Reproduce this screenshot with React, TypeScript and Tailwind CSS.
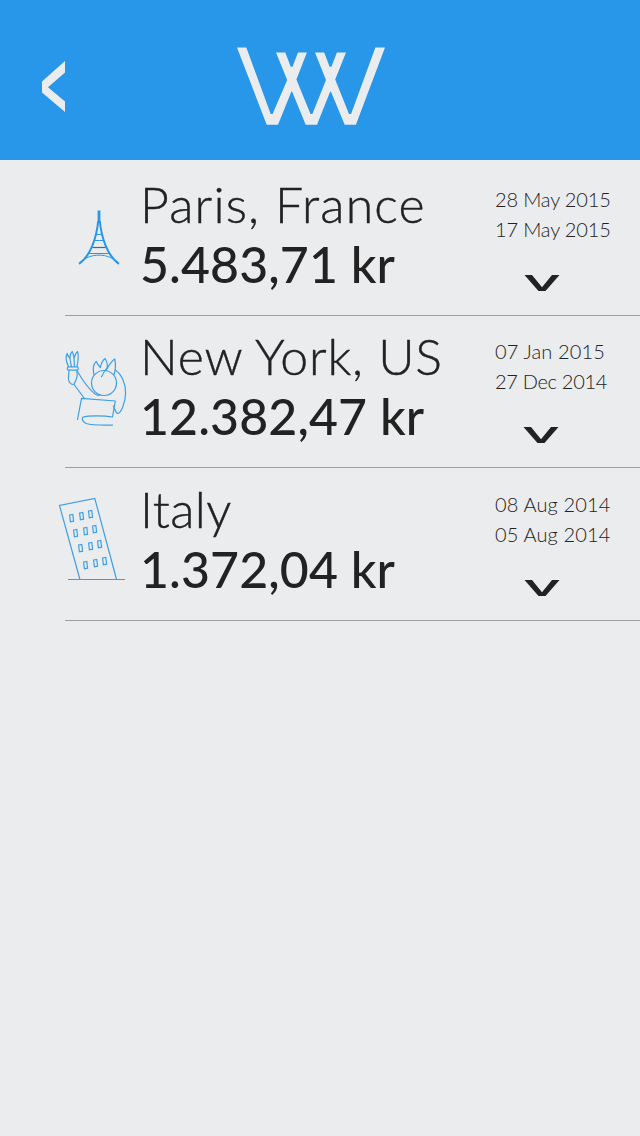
import type { ReactNode } from 'react';

function Logo() {
  return (
    <svg className="h-[80px] w-[150px]" viewBox="236 46 150 80" fill="#ebecee" aria-label="Logo">
      <path d="M237 47.4h9.3l24.4 66.6h1.9L287.2 80 276 52.4h9.3l5.4 14.3h1.8l5.5-14.3h8.9L296.4 79.5 310.5 114h1.9L326 80 315 52.4h9.2l5.4 14.3h1.8l5.5-14.3h9.1L335.2 79.5 349 114h2.1l24.3-66.6h9.6L355.9 124.7h-11.2L331 91.7h-.9L317 124.7h-11.3L292.2 91.7h-.9L278 124.7h-11.3z" />
    </svg>
  );
}

function EiffelTower() {
  return (
    <svg className="h-[141px] w-[140px] shrink-0" viewBox="0 174 140 141" fill="none" stroke="#2897e9">
      <path d="M99 210.5V223" strokeWidth="2.8" />
      <path d="M98.2 221C96.8 236 91 256 79 263.8M99.8 221C101.2 236 107 256 119 263.8" strokeWidth="2" />
      <path d="M96.5 234.5h5M94.5 240.5h9M88 253.5h22M80 263c9-10.5 29-10.5 38 0" strokeWidth="1" />
      <path d="M92.5 247.5h13" stroke="#1976ba" strokeWidth="1.2" />
    </svg>
  );
}

function LibertyStatue() {
  return (
    <svg className="h-[141px] w-[140px] shrink-0" viewBox="0 326 140 141" fill="none" stroke="#3b9fe8" strokeWidth="1.2" strokeLinejoin="round" strokeLinecap="round">
      <path d="M68.5 366.5C66 361 65.5 356 67.2 353.5C68 356 68.8 357.5 70 358.5C70 355 71 352.5 72.3 351.5C73.4 354 73.8 356 74 358.5C75 355 76 352.5 77.6 351.5C78.8 356 78.2 361 77 366.5M71.5 366.5C70.4 362 70.2 360 70 358.5M74.5 366.5L74 358.5" />
      <rect x="67.3" y="366.8" width="11" height="3.3" rx="1.4" />
      <path d="M69 370.3L68.4 379C69 382.5 71.5 384.5 73.8 384.5C75.5 381.5 77.2 377.5 77.2 374.5L76.8 370.3" />
      <path d="M77.5 371.5C83 381 90 390 95 394C97 395.3 99 395.5 100 395M74 384.5L84.5 398.5" />
      <circle cx="104" cy="383" r="12.5" />
      <path d="M93.8 374.5C92.7 369 93.5 364 96.2 361.3C97.5 364.5 99.3 366.5 100.3 367.5C101.3 363 103 360 105 358.5C106.8 361 107.6 364.5 107.3 368M106 370.5C108.5 366 111 361.5 114.7 359C115.8 364 115.6 370 114 374.5M101.5 376.7C103.5 372.5 105.5 369.5 107.5 367" />
      <path d="M115.2 370C121 373.5 125.8 383 125.6 393C125.3 403 121 413.5 117.5 413.5C115.8 412.5 114.5 409 113.5 406" />
      <path d="M77.5 419.5L81.5 398.3L115.3 401L112.5 417C105 415.5 88 415.3 83.3 417C81 418.8 82.7 422 86 423.5C94 425.7 103 425 112.5 425.1" />
    </svg>
  );
}

const towerWindows = [
  [71.5, 518], [81.5, 516], [90.4, 514],
  [75.5, 533], [85.5, 531], [94.5, 529],
  [80.5, 548], [90.5, 546], [99.5, 544],
  [85.5, 565], [95.5, 563], [104.5, 561],
];

function LeaningTower() {
  return (
    <svg className="h-[141px] w-[140px] shrink-0" viewBox="0 479 140 141" fill="none" stroke="#3b9fe8" strokeWidth="1.2">
      <path d="M79.8 579L59.5 505.4L94.8 498.4L116.4 579" />
      <path d="M68 579.5h57" />
      {towerWindows.map(([x, y]) => (
        <path key={`${x}-${y}`} d={`M${x - 1.9} ${y - 3}l3.2-.6l.8 6.8l-3.2 .6z`} />
      ))}
    </svg>
  );
}

type Trip = {
  icon: ReactNode;
  place: string;
  amount: string;
  end: string;
  start: string;
  top: string;
  placeTracking: string;
  endTracking: string;
  startTracking: string;
  chevron: string;
};

const trips: Trip[] = [
  {
    icon: <EiffelTower />, place: 'Paris, France', amount: '5.483,71 kr', end: '28 May 2015', start: '17 May 2015',
    top: 'pt-[14px]', placeTracking: 'tracking-[1.15px]',
    endTracking: 'tracking-[-0.15px]', startTracking: 'tracking-[-0.15px]', chevron: 'ml-[29px]',
  },
  {
    icon: <LibertyStatue />, place: 'New York, US', amount: '12.382,47 kr', end: '07 Jan 2015', start: '27 Dec 2014',
    top: 'pt-[10px]', placeTracking: 'tracking-[0.8px]',
    endTracking: 'tracking-[0.15px]', startTracking: 'tracking-[-0.3px]', chevron: 'ml-[28px]',
  },
  {
    icon: <LeaningTower />, place: 'Italy', amount: '1.372,04 kr', end: '08 Aug 2014', start: '05 Aug 2014',
    top: 'pt-[11px]', placeTracking: 'tracking-[0.4px]',
    endTracking: 'tracking-[0.15px]', startTracking: 'tracking-[0.15px]', chevron: 'ml-[29px]',
  },
];

function TripRow({ trip }: { trip: Trip }) {
  return (
    <li className={trip.top}>
      <div className="flex h-[141px]">
        {trip.icon}
        <div className="w-[355px] shrink-0 whitespace-nowrap text-[50px] leading-[60px]">
          <p className={`font-light [-webkit-text-stroke:0.4px_#222222] ${trip.placeTracking}`}>{trip.place}</p>
          <p className="font-medium tracking-[0.1px]">{trip.amount}</p>
        </div>
        <div className="pt-[10px] whitespace-nowrap text-[20px] leading-[30px] font-light">
          <p className={trip.endTracking}>{trip.end}</p>
          <p className={trip.startTracking}>{trip.start}</p>
          <svg className={`mt-[31px] h-[16px] w-[36px] ${trip.chevron}`} viewBox="0 0 36 16" fill="#222">
            <path d="M.5 0H8L18 12.3L28 0h7.5L21.5 16h-7z" />
          </svg>
        </div>
      </div>
      <div className="ml-[65px] h-px bg-[#9c9d9f]" />
    </li>
  );
}

export default function App() {
  return (
    <div className="h-[1136px] w-[640px] overflow-hidden bg-[#ebecee] font-['Lato',sans-serif] text-[#222222]">
      <header className="flex h-[160px] bg-[#2897e9] pl-[42px]">
        <button className="mt-[61px] h-[52px] w-[24px]" aria-label="Back">
          <svg className="h-[52px] w-[24px]" viewBox="42 61 24 52" fill="#ebecee">
            <path d="M65 61V72.5L48 87.3L65 101.5V112L42 92.5V81.5z" />
          </svg>
        </button>
        <div className="mt-[46px] ml-[170px]">
          <Logo />
        </div>
      </header>
      <ul>
        {trips.map((trip) => (
          <TripRow key={trip.place} trip={trip} />
        ))}
      </ul>
    </div>
  );
}
